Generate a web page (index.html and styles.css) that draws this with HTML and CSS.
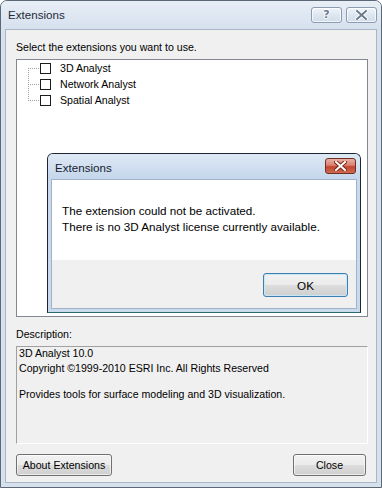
FILE: index.html
```html
<!DOCTYPE html>
<html>
<head>
<meta charset="utf-8">
<link rel="stylesheet" href="styles.css">
</head>
<body>
<div class="window">
  <div class="titlebar">
    <span class="title">Extensions</span>
    <div class="caption-buttons">
      <span class="cap-btn cap-help">?</span>
      <span class="cap-btn cap-close">
        <svg width="13" height="10" viewBox="0 0 13 10"><path d="M2 1 L11 9 M11 1 L2 9" stroke="#ffffff" stroke-width="4" stroke-linecap="square" fill="none"/><path d="M2 1 L11 9 M11 1 L2 9" stroke="#6a7b90" stroke-width="2" stroke-linecap="square" fill="none"/></svg>
      </span>
    </div>
  </div>
  <div class="client">
    <div class="label">Select the extensions you want to use.</div>
    <div class="listbox">
      <div class="tree">
        <svg class="tree-lines" width="12" height="41" viewBox="0 0 12 41">
          <path d="M0.5 8 V41 M0 8.5 H12 M0 24.5 H12 M0 40.5 H12" stroke="#a0a0a0" stroke-width="1" stroke-dasharray="1 1" fill="none"/>
        </svg>
        <ul class="items">
          <li class="item"><span class="check"></span><span>3D Analyst</span></li>
          <li class="item"><span class="check"></span><span>Network Analyst</span></li>
          <li class="item"><span class="check"></span><span>Spatial Analyst</span></li>
        </ul>
      </div>
    </div>
    <div class="label desc-label">Description:</div>
    <div class="desc">
      <p class="desc-line first">3D Analyst 10.0</p>
      <p class="desc-line">Copyright ©1999-2010 ESRI Inc. All Rights Reserved</p>
      <p class="desc-line">&nbsp;</p>
      <p class="desc-line">Provides tools for surface modeling and 3D visualization.</p>
    </div>
    <div class="buttons">
      <button class="btn btn-about">About Extensions</button>
      <button class="btn btn-close">Close</button>
    </div>
  </div>

  <div class="msgbox">
    <div class="msg-titlebar">
      <span class="msg-title">Extensions</span>
      <span class="msg-close">
        <svg width="13" height="10" viewBox="0 0 13 10"><path d="M2 1 L11 9 M11 1 L2 9" stroke="#7a2a1c" stroke-width="4" stroke-linecap="square" fill="none"/><path d="M2 1 L11 9 M11 1 L2 9" stroke="#ffffff" stroke-width="2" stroke-linecap="square" fill="none"/></svg>
      </span>
    </div>
    <div class="msg-body">
      <div class="msg-content">
        <p class="msg-line">The extension could not be activated.</p>
        <p class="msg-line">There is no 3D Analyst license currently available.</p>
      </div>
      <div class="msg-footer">
        <button class="ok-btn">OK</button>
      </div>
    </div>
  </div>
</div>
</body>
</html>
```

FILE: styles.css
```css
html, body {
  margin: 0;
  padding: 0;
  background: #ffffff;
}

.window {
  position: relative;
  width: 382px;
  height: 488px;
  box-sizing: border-box;
  border: 1px solid #5d6876;
  border-radius: 7px 7px 0 0;
  background: #d7e1ed;
  display: flex;
  flex-direction: column;
  font-family: "Liberation Sans", Arial, sans-serif;
  color: #000;
}

.titlebar {
  height: 28px;
  display: flex;
  justify-content: space-between;
  align-items: flex-start;
  padding: 0 4px 0 7px;
  background: linear-gradient(#e8eef6, #d6e1ee);
  border-radius: 6px 6px 0 0;
}

.title {
  font-size: 11.6px;
  line-height: 28px;
  color: #1f2a36;
}

.caption-buttons {
  display: flex;
  gap: 4px;
  margin-top: 6px;
}

.cap-btn {
  width: 31px;
  height: 16px;
  box-sizing: border-box;
  border: 1px solid #8b9bb0;
  border-radius: 3px;
  background: linear-gradient(#f1f5fa, #dde6f0 50%, #d2dde9);
  box-shadow: inset 0 0 0 1px rgba(255,255,255,0.7);
  display: flex;
  align-items: center;
  justify-content: center;
}

.cap-help {
  font-family: "DejaVu Sans", sans-serif;
  font-weight: bold;
  font-size: 11px;
  line-height: 14px;
  color: #6a7b90;
  text-shadow: 1px 0 #fff, -1px 0 #fff, 0 1px #fff, 0 -1px #fff;
}

.client {
  flex: 1;
  margin: 0 4px 4px 4px;
  border: 1px solid #a9b6c6;
  background: #f0f0f0;
  padding: 10px 8px 0 10px;
  display: flex;
  flex-direction: column;
}

.label {
  font-size: 10.6px;
  line-height: 14px;
  height: 14px;
}

.listbox {
  margin-top: 5px;
  height: 258px;
  box-sizing: border-box;
  border: 1px solid #828790;
  background: #ffffff;
  padding-left: 11px;
}

.tree {
  display: flex;
  align-items: flex-start;
}

.tree-lines {
  display: block;
  flex: none;
}

.items {
  list-style: none;
  margin: 0;
  padding: 0;
}

.item {
  display: flex;
  align-items: center;
  height: 16px;
  font-size: 10.6px;
}

.check {
  width: 11px;
  height: 11px;
  box-sizing: border-box;
  border: 1px solid #1c1c1c;
  background: #fff;
  margin-right: 9px;
  flex: none;
}

.desc-label {
  margin-top: 10px;
}

.desc {
  margin-top: 5px;
  height: 98px;
  box-sizing: border-box;
  border: 1px solid;
  border-color: #a0a0a0 #ffffff #ffffff #a0a0a0;
  background: #f0f0f0;
  padding: 0 0 0 2px;
}

.desc-line {
  margin: 0;
  font-size: 10.6px;
  line-height: 13px;
  white-space: nowrap;
}

.desc-line.first {
  margin-bottom: 2px;
}

.buttons {
  margin-top: 10px;
  display: flex;
  justify-content: space-between;
  padding-right: 2px;
}

.btn {
  height: 22px;
  box-sizing: border-box;
  border: 1px solid #707070;
  border-radius: 3px;
  background: linear-gradient(#f2f2f2, #ebebeb 50%, #dddddd 51%, #cfcfcf);
  box-shadow: inset 0 0 0 1px rgba(255,255,255,0.6);
  font-family: "Liberation Sans", Arial, sans-serif;
  font-size: 10.6px;
  color: #000;
  padding: 0;
}

.btn-about {
  width: 96px;
}

.btn-close {
  width: 73px;
}

/* Message box overlay */
.msgbox {
  position: absolute;
  left: 46px;
  top: 152px;
  width: 314px;
  height: 160px;
  box-sizing: border-box;
  border: 1px solid #1c2735;
  border-bottom-color: #2c6a72;
  border-radius: 6px 6px 0 0;
  background: #cad9eb;
  display: flex;
  flex-direction: column;
}

.msg-titlebar {
  height: 25px;
  flex: none;
  display: flex;
  justify-content: space-between;
  align-items: flex-start;
  padding: 0 4px 0 7px;
  background: linear-gradient(#dfe9f5, #c4d6eb);
  border-radius: 5px 5px 0 0;
}

.msg-title {
  font-size: 11.6px;
  line-height: 27px;
  color: #14202e;
}

.msg-close {
  width: 31px;
  height: 16px;
  box-sizing: border-box;
  margin-top: 4px;
  border: 1px solid #6e2f24;
  border-radius: 3px;
  background: linear-gradient(#e9b1a4, #d9806e 45%, #c4452f 55%, #cf6a50);
  display: flex;
  align-items: center;
  justify-content: center;
}

.msg-body {
  flex: 1;
  margin: 0 3px 3px 3px;
  border: 1px solid #9fb4cc;
  display: flex;
  flex-direction: column;
}

.msg-content {
  height: 80px;
  box-sizing: border-box;
  background: #ffffff;
  padding: 23px 0 0 10px;
}

.msg-line {
  margin: 0;
  font-size: 11.7px;
  line-height: 16px;
  white-space: nowrap;
}

.msg-footer {
  flex: 1;
  background: #f0f0f0;
  display: flex;
  justify-content: flex-end;
  align-items: flex-start;
  padding: 13px 8px 0 0;
}

.ok-btn {
  width: 85px;
  height: 24px;
  box-sizing: border-box;
  border: 1px solid #3c7fb1;
  border-radius: 3px;
  background: linear-gradient(#f2f2f2, #ebebeb 50%, #dddddd 51%, #cfcfcf);
  box-shadow: inset 0 0 0 1px #c9e6f7;
  font-family: "Liberation Sans", Arial, sans-serif;
  font-size: 11.7px;
  color: #000;
  padding: 0;
}
```
